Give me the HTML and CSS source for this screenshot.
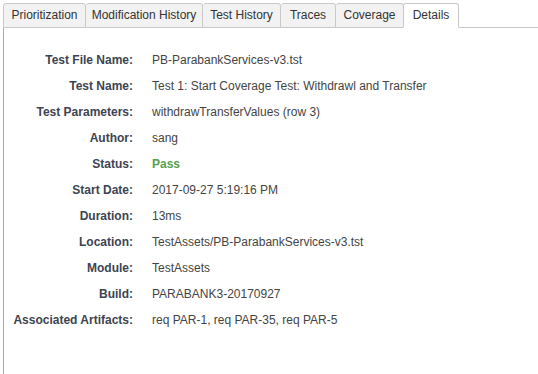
FILE: index.html
```html
<!DOCTYPE html>
<html lang="en">
   <head>
      <meta charset="UTF-8" />
      <title>Test Details</title>
      <link rel="stylesheet" href="styles.css">
   </head>
   <body>
      <div class="tabs">
         <div class="tab tab-prio">Prioritization</div>
         <div class="tab tab-mod">Modification History</div>
         <div class="tab tab-hist">Test History</div>
         <div class="tab tab-traces">Traces</div>
         <div class="tab tab-cov">Coverage</div>
         <div class="tab tab-details active">Details</div>
         <div class="tab-rest"></div>
      </div>
      <div class="panel">
         <div class="details">
            <div class="label">Test File Name:</div>
            <div class="value">PB-ParabankServices-v3.tst</div>

            <div class="label">Test Name:</div>
            <div class="value">Test 1: Start Coverage Test: Withdrawl and Transfer</div>

            <div class="label">Test Parameters:</div>
            <div class="value">withdrawTransferValues (row 3)</div>

            <div class="label">Author:</div>
            <div class="value">sang</div>

            <div class="label">Status:</div>
            <div class="value pass">Pass</div>

            <div class="label">Start Date:</div>
            <div class="value">2017-09-27 5:19:16 PM</div>

            <div class="label">Duration:</div>
            <div class="value">13ms</div>

            <div class="label">Location:</div>
            <div class="value">TestAssets/PB-ParabankServices-v3.tst</div>

            <div class="label">Module:</div>
            <div class="value">TestAssets</div>

            <div class="label">Build:</div>
            <div class="value">PARABANK3-20170927</div>

            <div class="label">Associated Artifacts:</div>
            <div class="value">req PAR-1, req PAR-35, req PAR-5</div>
         </div>
      </div>
   </body>
</html>
```

FILE: styles.css
```css
* {
   box-sizing: border-box;
}

body {
   margin: 0;
   padding: 3px 0 0 3px;
   height: 374px;
   background: #fff;
   font-family: 'Liberation Sans', Arial, sans-serif;
   font-size: 12px;
   color: #444;
   display: flex;
   flex-direction: column;
}

.tabs {
   display: flex;
   height: 25px;
}

.tab {
   line-height: 23px;
   text-align: center;
   background: #f2f2f2;
   border: 1px solid #c9c9c9;
   border-left: none;
   border-radius: 3px 3px 0 0;
   color: #333;
   white-space: nowrap;
   flex: none;
}

.tab:first-child {
   border-left: 1px solid #c9c9c9;
}

.tab-prio { width: 83px; }
.tab-mod { width: 117px; }
.tab-hist { width: 78px; }
.tab-traces { width: 55px; }
.tab-cov { width: 68px; }
.tab-details { width: 56px; }

.tab.active {
   background: #fff;
   border-bottom-color: #fff;
   border-left: 1px solid #c9c9c9;
   margin-left: -1px;
}

.tab-rest {
   flex: 1;
   border-bottom: 1px solid #c9c9c9;
}

.panel {
   flex: 1;
   border-left: 1px solid #a8a8a8;
   padding: 19px 0 0 9px;
}

.details {
   display: grid;
   grid-template-columns: 120px auto;
   grid-auto-rows: 26px;
   column-gap: 19px;
   align-items: center;
}

.label {
   text-align: right;
   font-weight: bold;
   color: #3d4452;
   white-space: nowrap;
}

.value {
   color: #444;
   white-space: nowrap;
}

.value.pass {
   color: #55a04a;
   font-weight: bold;
}
```
